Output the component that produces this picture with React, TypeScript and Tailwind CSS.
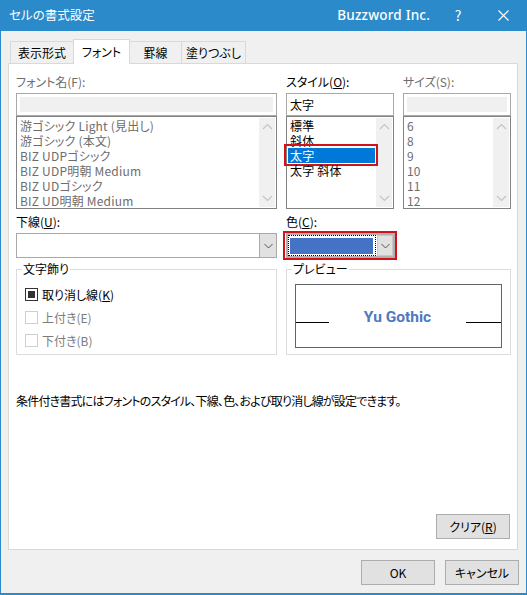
import React from "react";

const Up = () => (
  <svg width="11" height="7" viewBox="0 0 11 7" fill="none" stroke="currentColor" strokeWidth="1.2"><path d="M1 6 L5.5 1.5 L10 6" /></svg>
);
const Down = () => (
  <svg width="11" height="7" viewBox="0 0 11 7" fill="none" stroke="currentColor" strokeWidth="1.2"><path d="M1 1 L5.5 5.5 L10 1" /></svg>
);
const Chev = () => (
  <svg width="9" height="6" viewBox="0 0 9 6" fill="none" stroke="#555555" strokeWidth="1"><path d="M0.5 1 L4.5 5 L8.5 1" /></svg>
);

function ListBox({ items, muted, selected }: { items: string[]; muted?: boolean; selected?: number }) {
  return (
    <div className="relative h-[93px] border border-[#828282] bg-white flex">
      <div className={`flex-1 min-w-0 pt-[1px] pl-[1px] pr-[1px] tracking-[0.2px] ${muted ? "text-[#6d6d6d]" : "text-black"}`}>
        {items.map((t, i) => (
          <div key={t} className={`relative h-[15px] leading-[15px] pl-[2px] whitespace-nowrap ${selected === i ? "bg-[#0078d7] text-white" : ""}`}>
            {t}
            {selected === i && <div className="absolute -left-[4px] -right-[3px] -top-[4px] -bottom-[3px] border-2 border-[#d0121b]" />}
          </div>
        ))}
      </div>
      <div className="w-[16px] my-[1px] mr-[1px] bg-[#f0f0f0] flex flex-col justify-between items-center py-[5px] text-[#c4c4c4]">
        <Up />
        <Down />
      </div>
    </div>
  );
}

function Field({ value, muted, u, pre, post }: { value?: string; muted?: boolean; u?: string; pre: string; post: string }) {
  return (
    <div className="flex flex-col">
      <div className={`h-[22px] leading-[18px] pt-[2px] ${muted ? "text-[#6d6d6d]" : "text-black"}`}>
        {pre}
        {u ? <span className="underline">{u}</span> : null}
        {post}
      </div>
      <div className={`h-[23px] border border-[#a9a9a9] bg-white ${muted ? "p-[3px]" : "pl-[3px] leading-[21px]"}`}>
        {muted ? <div className="h-full bg-[#f0f0f0]" /> : value}
      </div>
    </div>
  );
}

function Check({ label, u, post, on, dim }: { label: string; u?: string; post?: string; on?: boolean; dim?: boolean }) {
  return (
    <div className={`h-[23px] flex items-center gap-[4px] ${dim ? "text-[#7c7c7c]" : "text-black"}`}>
      <div className={`w-[13px] h-[13px] border flex items-center justify-center bg-white ${dim ? "border-[#cfcfcf]" : "border-[#333333]"}`}>
        {on && <div className="w-[7px] h-[7px] bg-[#333333]" />}
      </div>
      <span>
        {label}
        {u ? <span className="underline">{u}</span> : null}
        {post}
      </span>
    </div>
  );
}

function Btn({ children }: { children: React.ReactNode }) {
  return (
    <button className="w-[74px] h-[25px] border border-[#adadad] bg-[#e1e1e1] text-black text-[12px] leading-[22px]">{children}</button>
  );
}

const Tab = ({ label, active, w }: { label: string; active?: boolean; w: string }) => (
  <div
    className={`${w} flex items-center justify-center border border-b-0 ${
      active ? "h-[25px] bg-white border-[#d9d9d9] relative z-10 -mb-[1px]" : "h-[22px] bg-[#f0f0f0] border-[#d9d9d9] -ml-[1px]"
    }`}
  >
    {label}
  </div>
);

export default function App() {
  return (
    <div className="w-[527px] h-[595px] flex flex-col bg-[#f0f0f0] border-x border-b-2 border-[#2b8ac9] text-[12px] text-black overflow-hidden [font-family:'Noto_Sans_CJK_JP','Liberation_Sans',sans-serif] [font-feature-settings:'palt']">
      <div className="h-[31px] -mx-[1px] shrink-0 bg-[#2b8ac9] text-white flex items-center pl-[9px]">
        <span className="text-[12.5px]">セルの書式設定</span>
        <span className="ml-auto mr-[7px] text-[13.5px] font-medium tracking-[0.2px] [font-family:'Noto_Sans','Liberation_Sans',sans-serif]">Buzzword Inc.</span>
        <span className="w-[42px] text-center text-[14px]">?</span>
        <span className="w-[48px] flex justify-center">
          <svg width="11" height="11" viewBox="0 0 11 11" stroke="white" strokeWidth="1.1"><path d="M0.5 0.5 L10.5 10.5 M10.5 0.5 L0.5 10.5" /></svg>
        </span>
      </div>

      <div className="flex items-end h-[32px] pl-[8px] shrink-0">
        <Tab label="表示形式" w="w-[64px] ml-[1px]" />
        <Tab label="フォント" w="w-[57px] -ml-[1px]" active />
        <Tab label="罫線" w="w-[53px]" />
        <Tab label="塗りつぶし" w="w-[65px]" />
      </div>

      <div className="ml-[7px] w-[510px] h-[487px] bg-white border border-[#d9d9d9] pl-[7px] pt-[7px] flex flex-col shrink-0">
        <div className="grid grid-cols-[261px_108px_108px] gap-x-[9px]">
          <div className="flex flex-col">
            <Field pre="フォント名(F):" post="" muted />
            <ListBox muted items={["游ゴシック Light (見出し)", "游ゴシック (本文)", "BIZ UDPゴシック", "BIZ UDP明朝 Medium", "BIZ UDゴシック", "BIZ UD明朝 Medium"]} />
          </div>
          <div className="flex flex-col">
            <Field pre="スタイル(" u="O" post="):" value="太字" />
            <ListBox items={["標準", "斜体", "太字", "太字 斜体"]} selected={2} />
          </div>
          <div className="flex flex-col">
            <Field pre="サイズ(S):" post="" muted />
            <ListBox muted items={["6", "8", "9", "10", "11", "12"]} />
          </div>
        </div>

        <div className="grid grid-cols-[261px_109px] gap-x-[9px] mt-[5px]">
          <div>
            <div className="h-[19px] leading-[16px]">下線(<span className="underline">U</span>):</div>
            <div className="h-[25px] border border-[#a9a9a9] bg-white flex justify-end">
              <div className="w-[17px] bg-[#e1e1e1] border-l border-[#a9a9a9] flex items-center justify-center"><Chev /></div>
            </div>
          </div>
          <div>
            <div className="h-[19px] leading-[16px]">色(<span className="underline">C</span>):</div>
            <div className="relative h-[25px] border-2 border-[#b0b0b0] bg-white flex">
              <div className="absolute -left-[5px] -right-[4px] -top-[4px] -bottom-[4px] border-2 border-[#d0121b]" />
              <div className="flex-1 border border-dotted border-black pl-[1px] pr-[2px] pt-[2px] pb-[1px]">
                <div className="h-full bg-[#4472c4]" />
              </div>
              <div className="w-[16px] ml-[1px] bg-[#e1e1e1] border border-[#c8c8c8] flex items-center justify-center"><Chev /></div>
            </div>
          </div>
        </div>

        <div className="grid grid-cols-[261px_224px] gap-x-[9px] mt-[4px]">
          <fieldset className="h-[93px] border border-[#dcdcdc] px-[8px]">
            <legend className="-ml-[3px] px-[1px] leading-[14px]">文字飾り</legend>
            <div className="mt-[7px]">
              <Check label="取り消し線(" u="K" post=")" on />
              <Check label="上付き(E)" dim />
              <Check label="下付き(B)" dim />
            </div>
          </fieldset>
          <fieldset className="h-[93px] border border-[#dcdcdc] px-[8px]">
            <legend className="-ml-[3px] px-[1px] leading-[14px]">プレビュー</legend>
            <div className="mt-[8px] h-[64px] w-[207px] border border-[#646464] flex items-center justify-between">
              <div className="w-[33px] h-px bg-black mt-[12px]" />
              <span className="pt-[3px] text-[15.5px] font-bold text-[#4f78c0] [font-family:'Roboto','Liberation_Sans',sans-serif]">Yu Gothic</span>
              <div className="w-[35px] h-px bg-black mt-[12px]" />
            </div>
          </fieldset>
        </div>

        <div className="mt-[37px] leading-[18px] tracking-[-0.8px]">条件付き書式にはフォントのスタイル、下線、色、および取り消し線が設定できます。</div>

        <div className="mt-auto mb-[10px] pr-[7px] flex justify-end">
          <Btn>クリア(<span className="underline">R</span>)</Btn>
        </div>
      </div>

      <div className="flex justify-end gap-[10px] mt-[10px] pr-[7px]">
        <Btn>OK</Btn>
        <Btn>キャンセル</Btn>
      </div>
    </div>
  );
}
